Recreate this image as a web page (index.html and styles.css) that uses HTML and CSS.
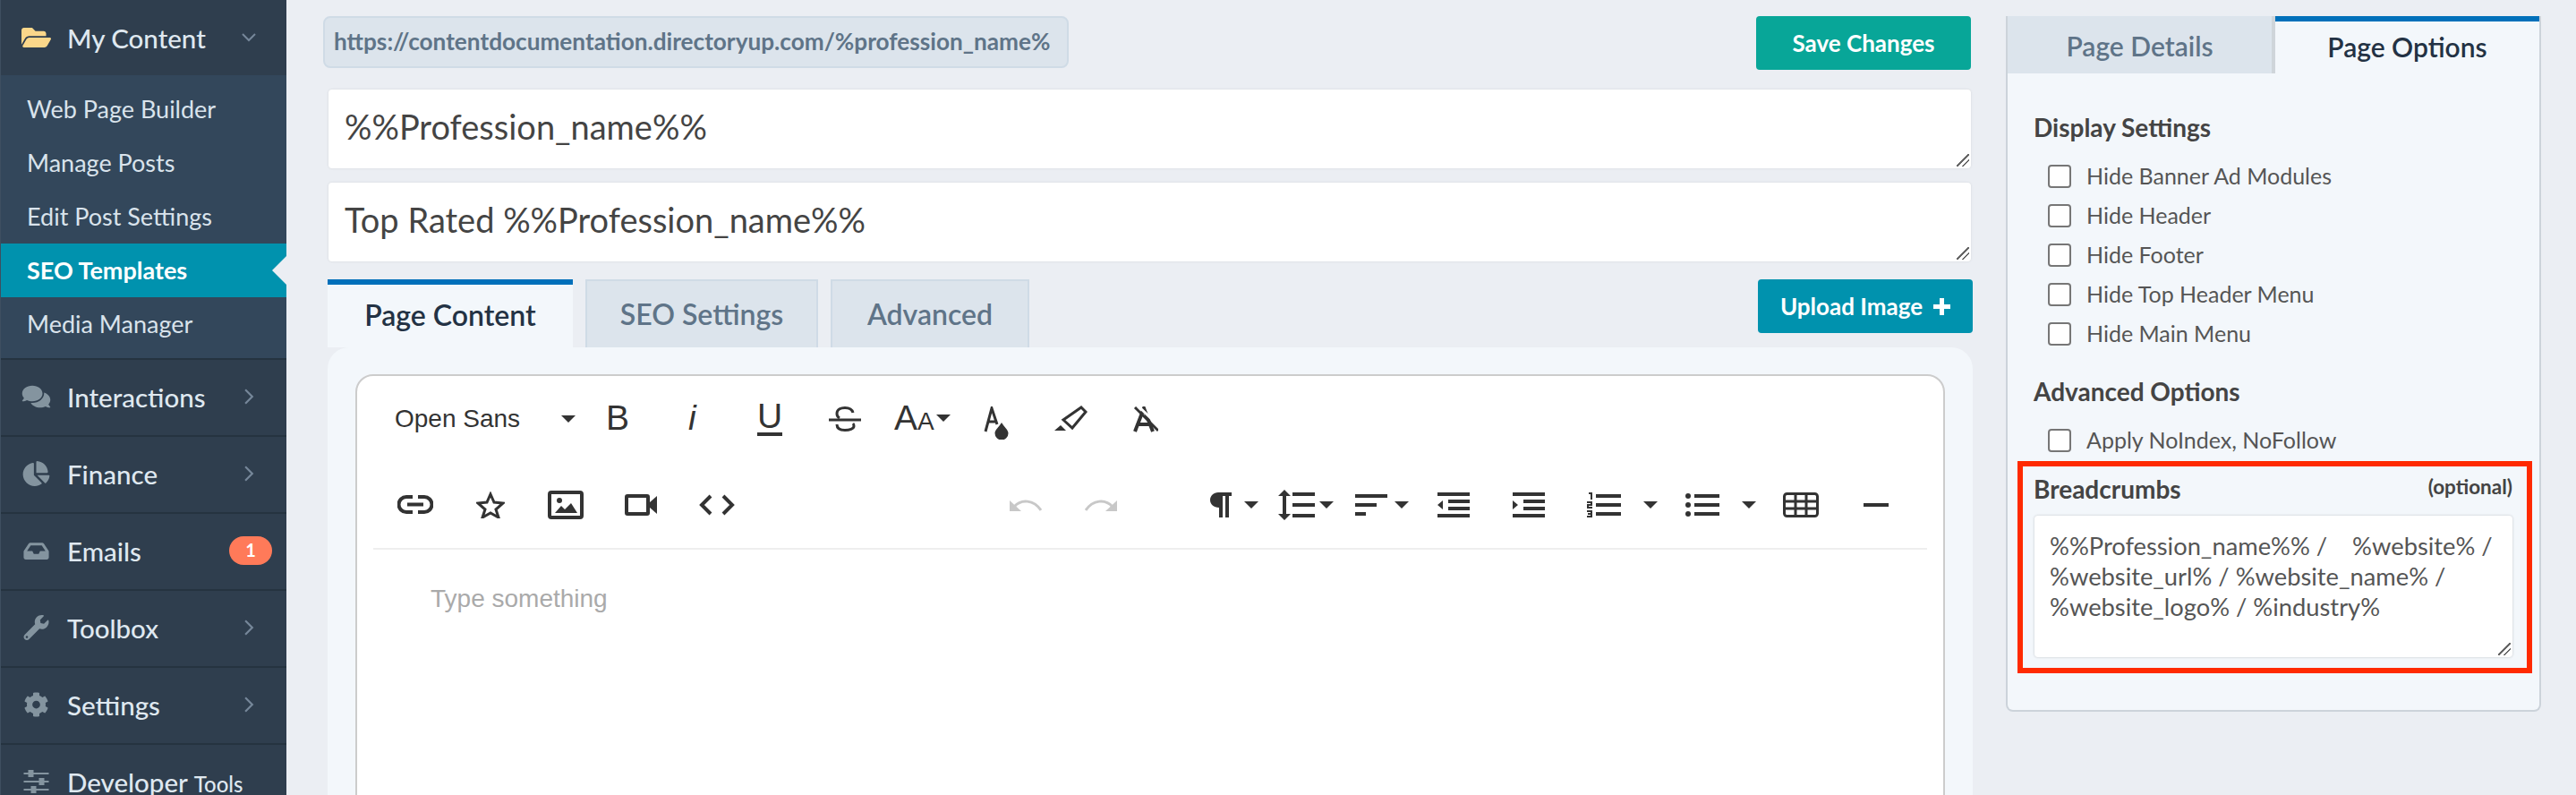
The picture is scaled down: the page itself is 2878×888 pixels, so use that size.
FILE: index.html
```html
<!DOCTYPE html>
<html lang="en">
  <head>
    <meta charset="utf-8" />
    <title>SEO Templates</title>
    <link rel="stylesheet" href="styles.css">
  </head>
  <body>
    <div class="app">
      <nav class="sidebar">
        <div class="nav-item nav-open">
          <svg class="nav-icon icon-folder" viewBox="0 0 576 512"><path d="M572.694 292.093L500.27 416.248A63.997 63.997 0 0 1 444.989 448H45.025c-18.523 0-30.064-20.093-20.731-36.093l72.424-124.155A64 64 0 0 1 152 256h399.964c18.523 0 30.064 20.093 20.73 36.093zM152 224h328v-48c0-26.51-21.49-48-48-48H272l-64-64H48C21.49 64 0 85.49 0 112v278.046l69.077-118.418C86.214 242.25 117.989 224 152 224z"/></svg>
          <span class="nav-label">My Content</span>
          <svg class="nav-arrow arrow-down" viewBox="0 0 16 10"><path d="M1 1l7 7 7-7"/></svg>
        </div>
        <div class="sub-menu">
          <a class="sub-item">Web Page Builder</a>
          <a class="sub-item">Manage Posts</a>
          <a class="sub-item">Edit Post Settings</a>
          <a class="sub-item sub-active">SEO Templates</a>
          <a class="sub-item">Media Manager</a>
        </div>
        <div class="nav-item">
          <svg class="nav-icon" viewBox="0 0 576 512"><path d="M416 192c0-88.4-93.1-160-208-160S0 103.6 0 192c0 34.3 14.1 65.9 38 92-13.4 30.2-35.5 54.2-35.8 54.5-2.2 2.3-2.8 5.7-1.5 8.7S4.8 352 8 352c36.6 0 66.9-12.3 88.7-25 32.2 15.7 70.3 25 111.3 25 114.9 0 208-71.6 208-160zm122 220c23.9-26 38-57.7 38-92 0-66.9-53.5-124.2-129.3-148.1.9 6.6 1.3 13.3 1.3 20.1 0 105.9-107.7 192-240 192-10.8 0-21.3-.8-31.7-1.9C207.8 439.6 281.8 480 368 480c41 0 79.1-9.2 111.3-25 21.8 12.7 52.1 25 88.7 25 3.2 0 6.1-1.9 7.3-4.8 1.3-2.9.7-6.3-1.5-8.7-.3-.3-22.4-24.2-35.8-54.5z"/></svg>
          <span class="nav-label">Interactions</span>
          <svg class="nav-arrow" viewBox="0 0 10 16"><path d="M1 1l7 7-7 7"/></svg>
        </div>
        <div class="nav-item">
          <svg class="nav-icon" viewBox="0 0 544 512"><path d="M527.79 288H290.5l158.03 158.03c6.04 6.04 15.98 6.53 22.19.68 38.7-36.46 65.32-85.61 73.13-140.86 1.34-9.46-6.51-17.85-16.06-17.85zm-15.83-64.8C503.72 103.74 408.26 8.28 288.8.04 279.68-.59 272 7.1 272 16.24V240h223.77c9.14 0 16.82-7.68 16.19-16.8zM224 288V50.71c0-9.55-8.39-17.4-17.84-16.06C86.99 51.49-4.1 155.6.14 280.37 4.5 408.51 114.83 513.59 243.03 511.98c50.4-.63 96.97-16.87 135.26-44.03 7.9-5.6 8.42-17.23 1.57-24.08L224 288z"/></svg>
          <span class="nav-label">Finance</span>
          <svg class="nav-arrow" viewBox="0 0 10 16"><path d="M1 1l7 7-7 7"/></svg>
        </div>
        <div class="nav-item">
          <svg class="nav-icon icon-inbox" viewBox="0 0 576 512"><path d="M567.938 243.908L462.25 85.374A48.003 48.003 0 0 0 422.311 64H153.689a48 48 0 0 0-39.938 21.374L8.062 243.908A47.994 47.994 0 0 0 0 270.533V400c0 26.51 21.49 48 48 48h480c26.51 0 48-21.49 48-48V270.533a47.994 47.994 0 0 0-8.062-26.625zM162.252 128h251.497l85.333 128H376l-32 64H232l-32-64H76.918l85.334-128z"/></svg>
          <span class="nav-label">Emails</span>
          <span class="badge">1</span>
        </div>
        <div class="nav-item">
          <svg class="nav-icon" viewBox="0 0 512 512"><path d="M507.73 109.1c-2.24-9.03-13.54-12.09-20.12-5.51l-74.36 74.36-67.88-11.31-11.31-67.88 74.36-74.36c6.62-6.62 3.43-17.9-5.66-20.16-47.38-11.74-99.55.91-136.58 37.93-39.64 39.64-50.55 97.1-34.05 147.2L18.74 402.76c-24.99 24.99-24.99 65.51 0 90.5 24.99 24.99 65.51 24.99 90.5 0l213.21-213.21c50.12 16.71 107.47 5.68 147.37-34.22 37.07-37.07 49.7-89.32 37.91-136.73zM64 472c-13.25 0-24-10.75-24-24 0-13.26 10.75-24 24-24s24 10.74 24 24c0 13.25-10.75 24-24 24z"/></svg>
          <span class="nav-label">Toolbox</span>
          <svg class="nav-arrow" viewBox="0 0 10 16"><path d="M1 1l7 7-7 7"/></svg>
        </div>
        <div class="nav-item">
          <svg class="nav-icon" viewBox="0 0 512 512"><path d="M487.4 315.7l-42.6-24.6c4.3-23.2 4.3-47 0-70.2l42.6-24.6c4.9-2.8 7.1-8.6 5.5-14-11.1-35.6-30-67.8-54.7-94.6-3.8-4.1-10-5.1-14.8-2.3L380.8 110c-17.9-15.4-38.5-27.3-60.8-35.1V25.8c0-5.6-3.9-10.5-9.4-11.7-36.7-8.2-74.3-7.8-109.2 0-5.5 1.2-9.4 6.1-9.4 11.7V75c-22.2 7.9-42.8 19.8-60.8 35.1L88.7 85.5c-4.9-2.8-11-1.9-14.8 2.3-24.7 26.7-43.6 58.9-54.7 94.6-1.7 5.4.6 11.2 5.5 14L67.3 221c-4.3 23.2-4.3 47 0 70.2l-42.6 24.6c-4.9 2.8-7.1 8.6-5.5 14 11.1 35.6 30 67.8 54.7 94.6 3.8 4.1 10 5.1 14.8 2.3l42.6-24.6c17.9 15.4 38.5 27.3 60.8 35.1v49.2c0 5.6 3.9 10.5 9.4 11.7 36.7 8.2 74.3 7.8 109.2 0 5.5-1.2 9.4-6.1 9.4-11.7v-49.2c22.2-7.9 42.8-19.8 60.8-35.1l42.6 24.6c4.9 2.8 11 1.9 14.8-2.3 24.7-26.7 43.6-58.9 54.7-94.6 1.5-5.5-.7-11.3-5.6-14.1zM256 336c-44.1 0-80-35.9-80-80s35.9-80 80-80 80 35.9 80 80-35.9 80-80 80z"/></svg>
          <span class="nav-label">Settings</span>
          <svg class="nav-arrow" viewBox="0 0 10 16"><path d="M1 1l7 7-7 7"/></svg>
        </div>
        <div class="nav-item">
          <svg class="nav-icon" viewBox="0 0 28 28"><path d="M0 4h28v2H0zM0 13h28v2H0zM0 22h28v2H0z"/><path d="M5 1h6v8H5zM17 10h6v8h-6zM8 19h6v8H8z"/></svg>
          <span class="nav-label">Developer <small>Tools</small></span>
        </div>
      </nav>

      <main class="main">
        <div class="top-row">
          <div class="url-box">https://contentdocumentation.directoryup.com/%profession_name%</div>
          <button class="btn btn-save">Save Changes</button>
        </div>
        <div class="big-input">%%Profession_name%%<span class="grip"></span></div>
        <div class="big-input">Top Rated %%Profession_name%%<span class="grip"></span></div>

        <div class="tab-row">
          <div class="tab tab-active">Page Content</div>
          <div class="tab tab-seo">SEO Settings</div>
          <div class="tab tab-adv">Advanced</div>
          <button class="btn btn-upload">Upload Image<svg class="plus" viewBox="0 0 19 19"><path d="M7 0h5v7h7v5h-7v7H7v-7H0V7h7z"/></svg></button>
        </div>

        <section class="panel">
          <div class="editor">
            <div class="tool-row">
              <span class="font-pick">Open Sans</span>
              <i class="caret caret-font"></i>
              <span class="tool-b">B</span>
              <span class="tool-i">i</span>
              <span class="tool-u">U</span>
              <svg class="tool tool-strike" viewBox="0 0 36 28"><path d="M27 7C26 3 22 1.500 18 1.500S9 3 9 8c0 2 1 4 3 5"/><path d="M27 19c1 1 1 2 1 3 0 3-5 4.500-10 4.500S9 25 9 20"/><path d="M0 15h36"/></svg>
              <span class="tool-aa">A<small>A</small></span>
              <i class="caret caret-aa"></i>
              <svg class="tool tool-drop" viewBox="0 0 28 37"><path d="M2 28L9 2l6 18M5 17h8"/><path class="solid" d="M20 18c3 5 7.500 8 7.500 12a7.500 7.500 0 0 1-15 0c0-4 4.500-7 7.500-12z"/></svg>
              <svg class="tool tool-eraser" viewBox="0 0 37 30"><path d="M30 2l5 5-15 18-10-9z"/><path class="solid" d="M0 28l7-6 6 6z"/></svg>
              <svg class="tool tool-clear" viewBox="0 0 28 29"><path class="thick" d="M2 28L12 2l10 26M5 20h14"/><path class="cut" d="M4 -2l26 25"/><path d="M2 1l26 26"/></svg>
            </div>
            <div class="tool-row tool-row-two">
              <svg class="tool tool-link" viewBox="0 0 40 21"><path class="thick" d="M17 2H10a8.500 8.500 0 0 0 0 17h7M23 2h7a8.500 8.500 0 0 1 0 17h-7M11 10.500h18"/></svg>
              <svg class="tool tool-star" viewBox="0 0 32 30"><path d="M16 3l4 9 10 1-8 7 3 9-9-5-9 5 3-9-8-7 10-1z"/></svg>
              <svg class="tool tool-image" viewBox="0 0 40 32"><rect class="thick" x="2" y="2" width="36" height="28" rx="2"/><circle class="solid" cx="13" cy="11" r="3"/><path class="solid" d="M8 25l7-8 4 4 7-7 7 11z"/></svg>
              <svg class="tool tool-video" viewBox="0 0 36 24"><rect class="thick" x="2" y="2" width="24" height="20" rx="1"/><path class="solid" d="M28 9l8-7v20l-8-7z"/></svg>
              <svg class="tool tool-code" viewBox="0 0 40 24"><path class="thick" d="M13 2L3 12l10 10M27 2l10 10-10 10"/></svg>
              <svg class="tool tool-undo" viewBox="0 0 36 13"><path class="grey" d="M0 1v12h13z"/><path class="grey-line" d="M5 8C13-1 27 0 35 12"/></svg>
              <svg class="tool tool-redo" viewBox="0 0 36 13"><path class="grey" d="M36 1v12H23z"/><path class="grey-line" d="M31 8C23-1 9 0 1 12"/></svg>
              <svg class="tool tool-para" viewBox="0 0 24 28"><path class="solid" d="M9 0h15v4h-3v24h-4V4h-3v24h-4V17C4 17 0 13 0 8.500S4 0 9 0z"/></svg>
              <i class="caret caret-para"></i>
              <svg class="tool tool-height" viewBox="0 0 41 34"><path class="solid" d="M7 0l7 7H9v20h5l-7 7-7-7h5V7H0z"/><path class="solid" d="M16 3h25v4H16zM16 15h25v4H16zM16 27h25v4H16z"/></svg>
              <i class="caret caret-height"></i>
              <svg class="tool tool-align" viewBox="0 0 36 24"><path class="solid" d="M0 0h36v4H0zM0 10h24v4H0zM0 20h12v4H0z"/></svg>
              <i class="caret caret-align"></i>
              <svg class="tool tool-out" viewBox="0 0 36 28"><path class="solid" d="M0 0h36v4H0zM12 8h24v4H12zM12 16h24v4H12zM0 24h36v4H0zM6 9v10l-6-5z"/></svg>
              <svg class="tool tool-ind" viewBox="0 0 36 28"><path class="solid" d="M0 0h36v4H0zM12 8h24v4H12zM12 16h24v4H12zM0 24h36v4H0zM0 9v10l6-5z"/></svg>
              <svg class="tool tool-ol" viewBox="0 0 38 28"><path class="solid" d="M10 2h28v4H10zM10 12h28v4H10zM10 22h28v4H10z"/><path class="solid" d="M2 0h4v8H4V2H2zM0 10h6v5H2v1h4v2H0v-5h4v-1H0zM0 20h6v8H0v-2h4v-1H1v-2h3v-1H0z"/></svg>
              <i class="caret caret-ol"></i>
              <svg class="tool tool-ul" viewBox="0 0 38 28"><path class="solid" d="M10 2h28v4H10zM10 12h28v4H10zM10 22h28v4H10z"/><circle class="solid" cx="3" cy="4" r="3"/><circle class="solid" cx="3" cy="14" r="3"/><circle class="solid" cx="3" cy="24" r="3"/></svg>
              <i class="caret caret-ul"></i>
              <svg class="tool tool-table" viewBox="0 0 40 28"><rect x="1.500" y="1.500" width="37" height="25" rx="3"/><path d="M1 10h38M1 18h38M14 1v26M26 1v26"/></svg>
              <span class="tool-hr"></span>
            </div>
            <div class="edit-area">Type something</div>
          </div>
        </section>
      </main>

      <aside class="side">
        <div class="side-tabs">
          <div class="side-tab">Page Details</div>
          <div class="side-tab side-tab-active">Page Options</div>
        </div>
        <div class="side-body">
          <h4 class="side-title">Display Settings</h4>
          <label class="check-row"><span class="check"></span>Hide Banner Ad Modules</label>
          <label class="check-row"><span class="check"></span>Hide Header</label>
          <label class="check-row"><span class="check"></span>Hide Footer</label>
          <label class="check-row"><span class="check"></span>Hide Top Header Menu</label>
          <label class="check-row"><span class="check"></span>Hide Main Menu</label>
          <h4 class="side-title title-adv">Advanced Options</h4>
          <label class="check-row"><span class="check"></span>Apply NoIndex, NoFollow</label>
          <div class="crumb-head">
            <h4 class="side-title">Breadcrumbs</h4>
            <span class="optional">(optional)</span>
          </div>
          <div class="crumb-input">%%Profession_name%% / &nbsp; &nbsp;%website% / %website_url% / %website_name% / %website_logo% / %industry%<span class="grip"></span></div>
          <div class="red-mark"></div>
        </div>
      </aside>
    </div>
  </body>
</html>
```

FILE: styles.css
```css
* {
  box-sizing: border-box;
}

html, body {
  margin: 0;
  height: 100%;
}

body {
  background-color: #ebeef3;
  color: #444;
  font-family: Lato, "Open Sans", sans-serif;
}

.app {
  display: flex;
  height: 888px;
  overflow: hidden;
}

/* sidebar */
.sidebar {
  flex: none;
  width: 320px;
  background-color: #2f3e4e;
  border-left: 1px solid #3e4f60;
  color: #dfe8f0;
}

.nav-item {
  display: flex;
  align-items: center;
  height: 86px;
  padding: 0 0 2px 23px;
  border-bottom: 2px solid #253340;
  font-size: 29.5px;
  font-weight: 500;
  position: relative;
}

.nav-open {
  height: 84px;
  padding-bottom: 0;
  border-bottom: 0;
}

.nav-icon {
  flex: none;
  width: 33px;
  height: 28px;
  margin-right: 18px;
  fill: #84949f;
}

.icon-folder {
  height: 30px;
  fill: #fbd78a;
}

.icon-inbox {
  height: 25px;
}

.nav-label small {
  font-size: 24px;
}

.nav-arrow {
  position: absolute;
  left: 272px;
  width: 11px;
  height: 18px;
  fill: none;
  stroke: #76879a;
  stroke-width: 2;
}

.arrow-down {
  left: 269px;
  width: 16px;
  height: 10px;
}

.badge {
  position: absolute;
  left: 255px;
  width: 48px;
  height: 32px;
  border-radius: 16px;
  background-color: #ff7a59;
  color: #fff;
  font-size: 20px;
  font-weight: 700;
  text-align: center;
  line-height: 30px;
}

.sub-menu {
  background-color: #33475b;
  padding: 8px 0;
  border-bottom: 2px solid #253340;
}

.sub-item {
  display: block;
  position: relative;
  height: 60px;
  padding-left: 29px;
  color: #d9e3ec;
  font-size: 27px;
  line-height: 60px;
}

.sub-active {
  background-color: #0092ae;
  color: #fff;
  font-weight: 700;
}

.sub-active::after {
  content: "";
  position: absolute;
  right: 0;
  top: 14px;
  border-style: solid;
  border-width: 16px 16px 16px 0;
  border-color: transparent #ebeef3 transparent transparent;
}

/* main column */
.main {
  flex: none;
  width: 1884px;
  padding: 18px 0 0 41px;
}

.top-row {
  display: flex;
  justify-content: space-between;
  align-items: flex-start;
  padding-right: 2px;
}

.url-box {
  width: 833px;
  height: 58px;
  padding-left: 10px;
  background-color: #dce4ec;
  border: 2px solid #cfdbe6;
  border-radius: 8px;
  color: #5f7488;
  font-size: 26.2px;
  font-weight: 700;
  line-height: 52px;
  white-space: nowrap;
  overflow: hidden;
}

.btn {
  border: 0;
  border-radius: 4px;
  width: 240px;
  height: 60px;
  color: #fff;
  font-family: inherit;
  font-size: 26px;
  font-weight: 700;
}

.btn-save {
  background-color: #08a698;
}

.btn-upload {
  display: flex;
  align-items: center;
  justify-content: center;
  gap: 12px;
  margin-left: auto;
  background-color: #0092ae;
}

.plus {
  width: 19px;
  height: 19px;
  fill: #fff;
}

.big-input {
  position: relative;
  height: 88px;
  margin: 22px 2px 0 6px;
  padding-left: 18px;
  background-color: #fff;
  border-radius: 4px;
  box-shadow: 0 0 3px rgba(0, 0, 0, .1);
  color: #444;
  font-size: 38px;
  line-height: 83px;
}

.big-input + .big-input {
  margin-top: 16px;
}

.grip {
  position: absolute;
  right: 2px;
  bottom: 2px;
  width: 14px;
  height: 14px;
  background: linear-gradient(135deg, transparent 0 45%, #666 45% 55%, transparent 55% 68%, #666 68% 76%, transparent 76%);
}

.tab-row {
  display: flex;
  align-items: flex-start;
  margin: 20px 0 0 5px;
  gap: 14px;
}

.tab {
  height: 76px;
  background-color: #dce4ec;
  border: 2px solid #cfdbe6;
  border-bottom: 0;
  color: #5f7488;
  font-size: 32px;
  font-weight: 600;
  text-align: center;
  line-height: 74px;
}

.tab-seo {
  width: 260px;
}

.tab-adv {
  width: 222px;
}

.tab-active {
  width: 274px;
  background-color: #f3f7fb;
  border: 0;
  border-top: 6px solid #0070ba;
  color: #233244;
  line-height: 68px;
}

.panel {
  height: 520px;
  margin-left: 5px;
  padding: 30px 31px 0;
  background-color: #f3f7fb;
  border-radius: 24px 24px 0 0;
}

.editor {
  height: 500px;
  background-color: #fff;
  border: 2px solid #ccc;
  border-radius: 20px;
  padding: 0 18px;
}

/* toolbar icons sit on a free strip, like the editor plugin places them */
.tool-row {
  position: relative;
  height: 96px;
  color: #333;
  font-family: "Liberation Sans", sans-serif;
}

.tool-row > * {
  position: absolute;
}

.tool-row-two {
  border-bottom: 2px solid #eee;
  height: 98px;
}

.edit-area {
  padding: 37px 64px;
  color: #aaa;
  font-family: "Liberation Sans", sans-serif;
  font-size: 28px;
  line-height: 36px;
}

.tool {
  fill: none;
  stroke: #333;
  stroke-width: 3;
}

.tool .thick {
  stroke-width: 4;
}

.tool .solid {
  fill: #333;
  stroke: none;
}

.tool .cut {
  stroke: #fff;
}

.tool .grey {
  fill: #c8c8c8;
  stroke: none;
}

.tool .grey-line {
  stroke: #c8c8c8;
}

.font-pick {
  left: 24px;
  top: 30px;
  font-size: 28px;
  line-height: 36px;
}

.caret {
  width: 0;
  height: 0;
  border-style: solid;
  border-width: 8px 8px 0;
  border-color: #333 transparent transparent;
  top: 44px;
}

.caret-font {
  left: 210px;
}

.tool-b, .tool-i, .tool-u, .tool-aa {
  font-size: 39px;
  line-height: 40px;
  top: 27px;
}

.tool-b {
  left: 260px;
}

.tool-i {
  left: 352px;
  font-style: italic;
}

.tool-u {
  left: 429px;
  line-height: 36px;
  border-bottom: 4px solid #333;
}

.tool-strike {
  left: 509px;
  top: 34px;
  width: 36px;
  height: 28px;
}

.tool-aa {
  left: 582px;
}

.tool-aa small {
  font-size: 28px;
}

.caret-aa {
  left: 629px;
  top: 43px;
}

.tool-drop {
  left: 682px;
  top: 34px;
  width: 28px;
  height: 37px;
}

.tool-eraser {
  left: 761px;
  top: 33px;
  width: 37px;
  height: 30px;
}

.tool-clear {
  left: 849px;
  top: 34px;
  width: 28px;
  height: 29px;
}

.tool-link {
  left: 27px;
  top: 37px;
  width: 40px;
  height: 21px;
}

.tool-star {
  left: 115px;
  top: 33px;
  width: 32px;
  height: 30px;
}

.tool-image {
  left: 195px;
  top: 32px;
  width: 40px;
  height: 32px;
}

.tool-video {
  left: 281px;
  top: 36px;
  width: 36px;
  height: 24px;
}

.tool-code {
  left: 364px;
  top: 36px;
  width: 40px;
  height: 24px;
}

.tool-undo {
  left: 711px;
  top: 42px;
  width: 36px;
  height: 13px;
}

.tool-redo {
  left: 795px;
  top: 42px;
  width: 36px;
  height: 13px;
}

.tool-para {
  left: 935px;
  top: 34px;
  width: 24px;
  height: 28px;
}

.caret-para {
  left: 973px;
}

.tool-height {
  left: 1011px;
  top: 31px;
  width: 41px;
  height: 34px;
}

.caret-height {
  left: 1057px;
}

.tool-align {
  left: 1097px;
  top: 36px;
  width: 36px;
  height: 24px;
}

.caret-align {
  left: 1141px;
}

.tool-out {
  left: 1189px;
  top: 34px;
  width: 36px;
  height: 28px;
}

.tool-ind {
  left: 1273px;
  top: 34px;
  width: 36px;
  height: 28px;
}

.tool-ol {
  left: 1356px;
  top: 34px;
  width: 38px;
  height: 28px;
}

.caret-ol {
  left: 1419px;
}

.tool-ul {
  left: 1466px;
  top: 34px;
  width: 38px;
  height: 28px;
}

.caret-ul {
  left: 1529px;
}

.tool-table {
  left: 1575px;
  top: 34px;
  width: 40px;
  height: 28px;
}

.tool-hr {
  left: 1665px;
  top: 46px;
  width: 28px;
  height: 4px;
  background-color: #333;
}

/* right column */
.side {
  flex: none;
  width: 598px;
  margin: 18px 0 0 37px;
}

.side-tabs {
  display: flex;
  border: 2px solid #ccd3da;
  border-width: 0 2px;
}

.side-tab {
  flex: 1;
  height: 64px;
  background-color: #dce4ec;
  border-right: 4px solid #cfd5da;
  color: #5f7488;
  font-size: 30px;
  font-weight: 600;
  text-align: center;
  line-height: 66px;
}

.side-tab-active {
  background-color: #f3f7fb;
  border-right: 0;
  border-top: 6px solid #0070ba;
  color: #233244;
  line-height: 56px;
}

.side-body {
  position: relative;
  height: 713px;
  padding: 43px 30px 0 29px;
  background-color: #f3f7fb;
  border: 2px solid #ccd3da;
  border-top: 0;
  border-radius: 0 0 8px 8px;
}

.side-title {
  margin: 0 0 16px;
  color: #444;
  font-size: 28px;
  font-weight: 700;
  line-height: 34px;
}

.title-adv {
  margin-top: 25px;
}

.check-row {
  display: flex;
  align-items: center;
  height: 44px;
  padding: 0 0 3px 16px;
  color: #555;
  font-size: 25px;
}

.check {
  flex: none;
  width: 26px;
  height: 26px;
  margin: 3px 17px 0 0;
  background-color: #fff;
  border: 2px solid #767676;
  border-radius: 4px;
}

.crumb-head {
  display: flex;
  justify-content: space-between;
  margin: 15px 0 13px;
}

.crumb-head .side-title {
  margin: 0;
}

.optional {
  color: #444;
  font-size: 22.5px;
  font-weight: 700;
  line-height: 30px;
}

.crumb-input {
  position: relative;
  height: 158px;
  margin-left: 1px;
  padding: 17px 17px 0;
  background-color: #fff;
  border-radius: 4px;
  box-shadow: 0 0 3px rgba(0, 0, 0, .2);
  color: #555;
  font-size: 27.3px;
  line-height: 34px;
}

.red-mark {
  position: absolute;
  left: 11px;
  top: 433px;
  width: 575px;
  height: 237px;
  border: 6px solid #ff2a00;
}
```
